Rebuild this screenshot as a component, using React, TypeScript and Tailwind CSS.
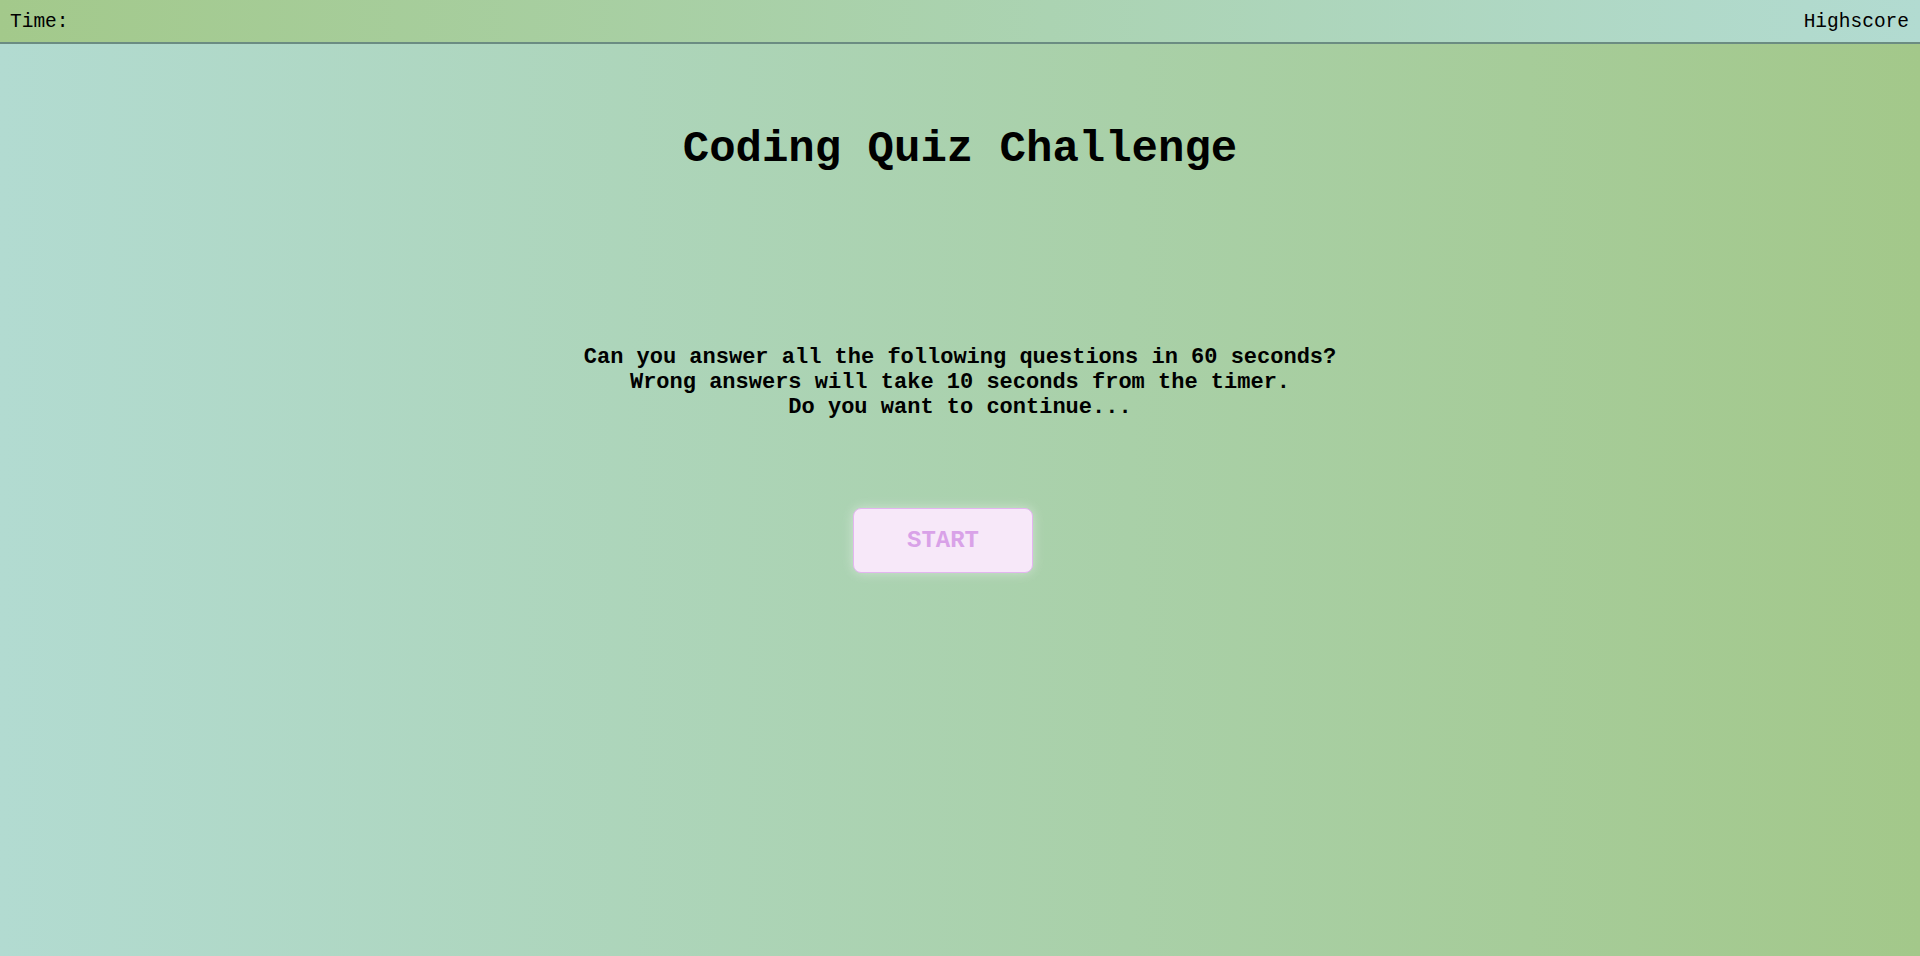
import React from "react";

function App() {
	return (
		<div className="min-h-[956px] w-full bg-gradient-to-r from-[#b2dbd1] to-[#a3c88a] font-['Liberation_Mono',monospace] text-black">
			<header className="flex h-[44px] items-center justify-between border-b-2 border-[#6b8c82] bg-gradient-to-r from-[#a3c98b] to-[#b2dbd1] pl-[10px] pr-[11px] pt-[4px] text-[19.5px]">
				<span>Time:</span>
				<span>Highscore</span>
			</header>
			<main className="flex flex-col items-center">
				<h1 className="mt-[80px] text-[44px] font-bold leading-[50px]">
					Coding Quiz Challenge
				</h1>
				<p className="mt-[171px] text-center text-[22px] font-bold leading-[25px]">
					Can you answer all the following questions in 60 seconds?
					<br />
					Wrong answers will take 10 seconds from the timer.
					<br />
					Do you want to continue...
				</p>
				<div className="mt-[88px] flex w-full justify-center pr-[34px]">
					<button className="h-[65px] w-[180px] rounded-[8px] border border-[#e3b5f0] bg-[#f7e8f9] text-[24px] font-bold text-[#d9a2e8] shadow-[0_0_12px_rgba(235,240,235,0.6)]">
						START
					</button>
				</div>
			</main>
		</div>
	);
}

export default App;
